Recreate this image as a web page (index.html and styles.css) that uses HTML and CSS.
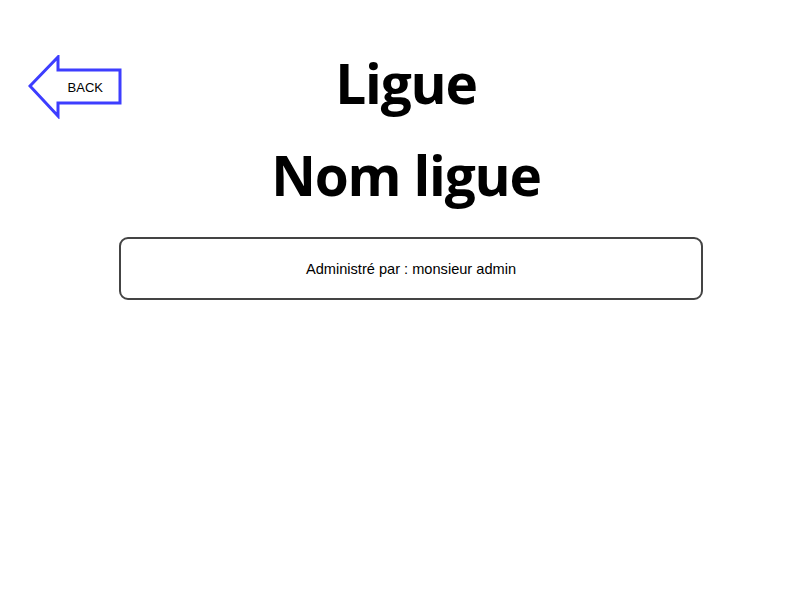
FILE: index.html
```html
<!DOCTYPE html>
<html lang="fr">
<head>
<meta charset="utf-8">
<title>Ligue</title>
<link rel="stylesheet" href="styles.css">
</head>
<body>
<div class="page">
  <div class="top">
    <a class="back" href="#">
      <svg class="back-shape" width="94" height="64" viewBox="0 0 94 64">
        <polygon points="2,31 30,2 30,15 92,15 92,48 30,48 30,61" fill="#fff" stroke="#3d3dff" stroke-width="3" stroke-linejoin="miter"/>
      </svg>
      <span class="back-label">BACK</span>
    </a>
    <div class="titles">
      <h1 class="title">Ligue</h1>
      <h2 class="title">Nom ligue</h2>
    </div>
  </div>
  <div class="info">Administré par : monsieur admin</div>
</div>
</body>
</html>
```
FILE: styles.css
```css
html, body {
  margin: 0;
  padding: 0;
  background: #fff;
}
.page {
  width: 800px;
  height: 600px;
  font-family: "Liberation Sans", Arial, sans-serif;
}
.top {
  display: grid;
  grid-template-columns: 120px 572px;
  padding-top: 37px;
}
.back {
  display: grid;
  margin-left: 28px;
  margin-top: 18px;
  width: 94px;
  height: 64px;
  text-decoration: none;
  color: #000;
}
.back-shape {
  grid-area: 1 / 1;
}
.back-label {
  grid-area: 1 / 1;
  font-size: 13px;
  align-self: center;
  justify-self: end;
  margin-right: 19px;
}
.titles {
  display: flex;
  flex-direction: column;
  align-items: center;
}
.title {
  margin: 0;
  font-family: "Open Sans", sans-serif;
  font-weight: 700;
  font-size: 55px;
  line-height: 92px;
  letter-spacing: -1.2px;
}
.info {
  margin: 16px 0 0 119px;
  width: 580px;
  height: 59px;
  border: 2px solid #444;
  border-radius: 9px;
  display: flex;
  align-items: center;
  justify-content: center;
  font-size: 14.6px;
}
```
